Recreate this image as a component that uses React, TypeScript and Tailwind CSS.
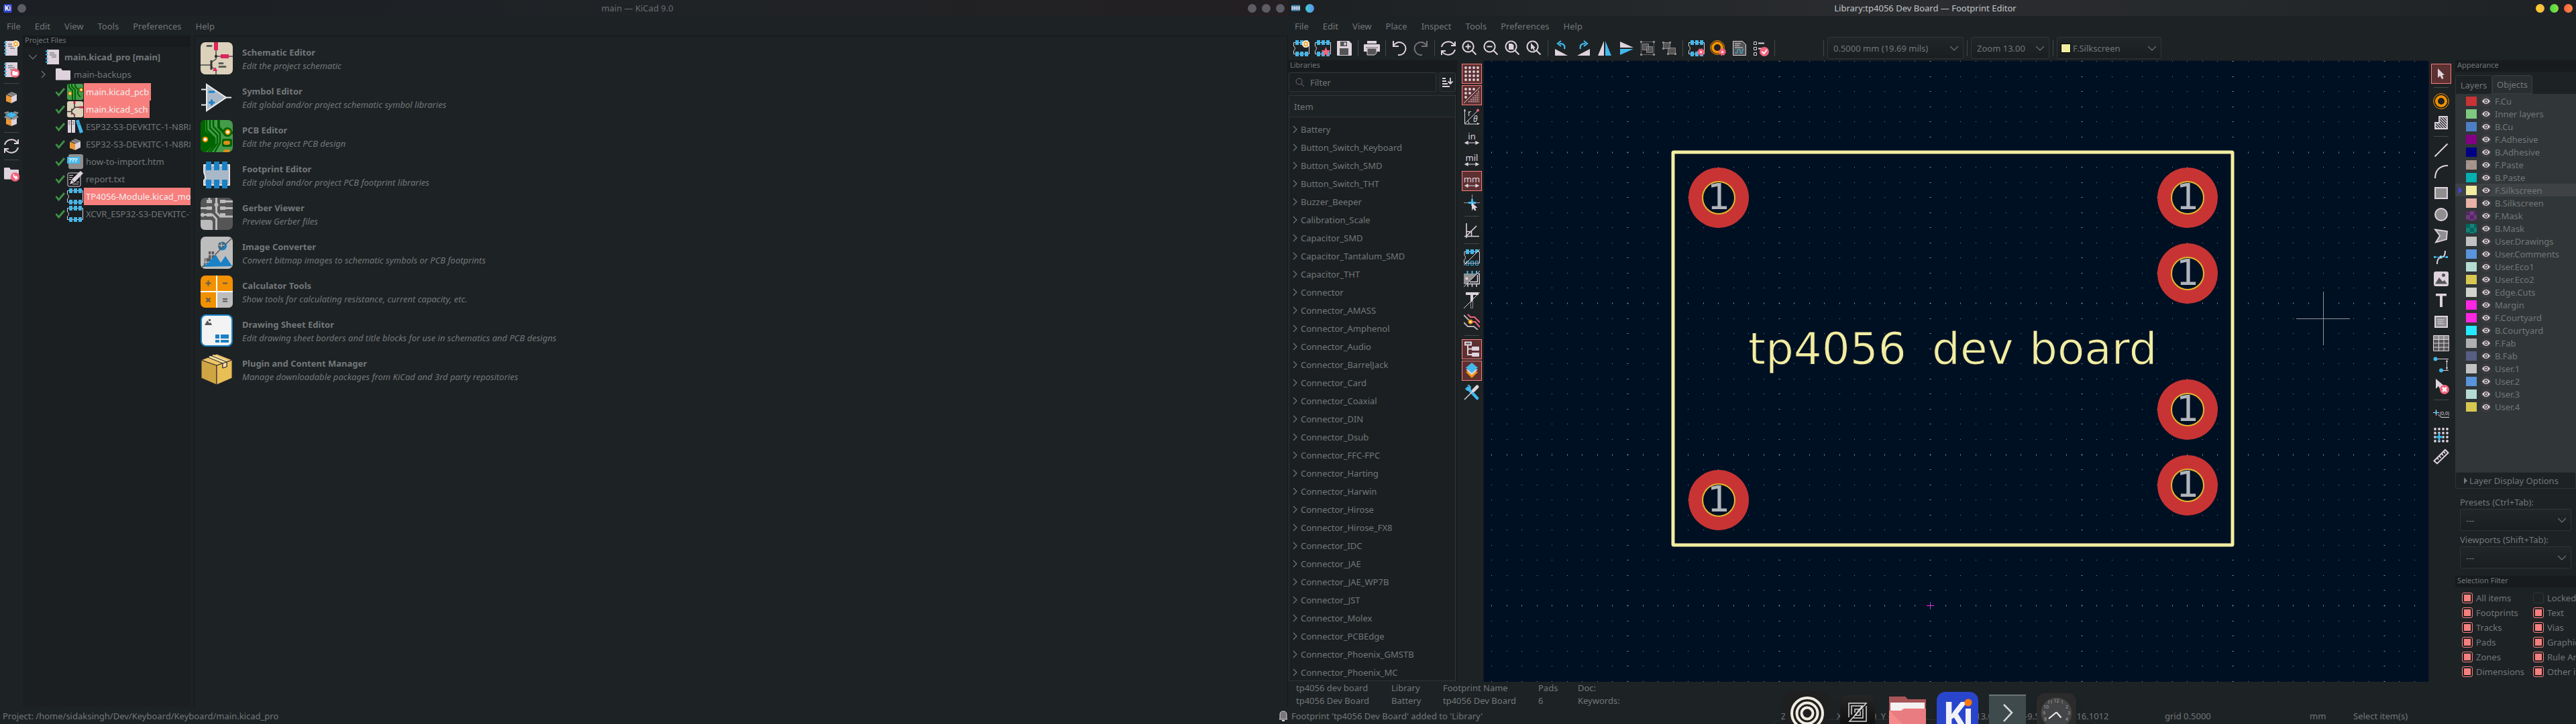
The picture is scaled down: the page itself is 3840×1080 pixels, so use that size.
import React from "react";

const L = "#ded3dd";
const B = "#42b8eb";
const R = "#f2647e";
const O = "#f29100";
const D = "#545454";
const G = "#8f8f8f";

/* ---------- icon drawings, all on a 24 x 24 grid ---------- */

const footprint = (
  <>
    <path d="M2 3.5H23.5V20.5H.5V15.5C3 15 3 9.500 .5 9V3.500H2" fill="none" stroke={L} />
    <path d="M3 0h5v7H3zM10 0h5v7h-5zM17 0h5v7h-5zM3 17h5v7H3zM10 17h5v7h-5zM17 17h5v7h-5z" fill={B} />
  </>
);
const sun = (
  <g stroke={O}>
    <circle cx="18.500" cy="5.500" r="5.500" fill="#fff" stroke="none" />
    <path d="M18.500 .5v10M13.500 5.500h10M15 2l7 7M22 2l-7 7" strokeWidth="1.200" />
    <circle cx="18.500" cy="5.500" r="2" fill="#fff" />
  </g>
);
const notebook = (
  <>
    <path d="M3 1h18v22H3z" fill={L} />
    <path d="M7 6h7M7 9h10M10 12h7" stroke={D} />
    <path d="M1 3.500h4M1 8.500h4M1 14.500h4M1 19.500h4" stroke={B} strokeWidth="2" />
  </>
);
const folder = <path d="M1 5.500V4q0-1 1-1h7l2 3h11q1 0 1 1v12.500q0 1-1 1H2q-1 0-1-1z" fill={L} />;
const box = (
  <>
    <path d="M12 4l8 3-7 4-8-3z" fill={G} />
    <path d="M4 8.500l8 3V21l-8-3z" fill="#ea9836" />
    <path d="M12 11.500l8-4V17l-8 4z" fill={L} />
    <path d="M9 5.500l7 3" stroke={D} />
  </>
);
const refresh = (
  <g fill="none" stroke={L} strokeWidth="2">
    <path d="M2 10C4 2 15-1 21 7M22 14C20 22 9 25 3 17" />
    <path d="M22 2v6h-6M2 22v-6h6" />
  </g>
);
const gear = (
  <>
    <circle cx="18.500" cy="17.500" r="4.500" fill={R} stroke={R} strokeWidth="2" strokeDasharray="2 1.500" />
    <circle cx="18.500" cy="17.500" r="1.500" fill="#fff" />
  </>
);
const lens = <path d="M9.500 1.500a8 8 0 1 0 .1 0M15.500 15.500l6 6" fill="none" stroke={L} strokeWidth="2" />;
const arrowLR = <path d="M4 19h16M2 19l4-2v4zM22 19l-4-2v4z" stroke={L} fill={L} strokeWidth="1.200" />;
const dots = (n: number, step: number, from: number) =>
  Array.from({ length: n * n }, (_, i) => (
    <circle key={i} cx={from + (i % n) * step} cy={from + Math.floor(i / n) * step} r="1.900" fill={L} />
  ));
const slash = <path d="M0 24L24 0" stroke={L} />;

const ICONS: Record<string, React.ReactNode> = {
  notebook,
  folder,
  box,
  refresh,
  footprint,
  newProject: (<>{notebook}{sun}</>),
  openProject: (
    <>
      {notebook}
      <circle cx="17.500" cy="17" r="6.800" fill={R} />
      <path d="M13.500 14h3l1 1h4v5.500h-8z" fill="#fff" />
    </>
  ),
  unbox: (
    <>
      <path d="M4 10l8 3v10l-8-3z" fill="#ea9836" />
      <path d="M12 13l8-3v10l-8 3z" fill={L} />
      <path d="M3 6l9-4 9 4-9 5z" fill={B} />
      <path d="M3 5l7-2-3-2-6 2zM21 5l-7-2 3-2 6 2zM4 7l8 4-3 3-8-4zM20 7l-8 4 3 3 8-4z" fill={G} />
    </>
  ),
  folderGo: (
    <>
      {folder}
      <circle cx="17.500" cy="17" r="6.800" fill={R} />
      <path d="M15.500 13v2q0 3 4 3M18 15.500l2.500 2.500-2.500 2.500" fill="none" stroke="#fff" strokeWidth="1.800" />
    </>
  ),
  check: <path d="M5.500 12l4 5L18 7" fill="none" stroke="#3f9148" strokeWidth="2.800" />,
  pcb: (
    <>
      <rect width="24" height="24" rx="3" fill="#459b4b" />
      <path d="M3 0v5l5 5v14M7 0v4l5 5v15M12 0v4l4 4h5M16 10v5l4 5" fill="none" stroke="#006400" strokeWidth="2" />
      <circle cx="21" cy="9" r="3.500" fill="#006400" />
      <g fill="#fff" stroke={O} strokeWidth="1.500">
        <circle cx="4.500" cy="14.500" r="2" />
        <circle cx="21" cy="9" r="2" />
      </g>
    </>
  ),
  sch: (
    <>
      <rect width="24" height="24" rx="3" fill="#dcd1bb" />
      <path d="M11 3v7l-4 4M11 9h8M0 15.500h7M7 11v9M7 17l4 3v4" fill="none" stroke="#333" strokeWidth="1.500" />
      <path d="M9.500 0h3v4h-3zM18 7.500h6v3h-6zM10 18l3 3h-4z" fill="#c8234a" />
    </>
  ),
  books: (
    <>
      <path d="M1 2h5v19H1zM7 2h5v19H7z" fill={L} />
      <path d="M2 5h3M2 8h3M8 5h3M8 8h3" stroke={D} />
      <path d="M13 3l4.500-1.500L24 20l-5 2z" fill={B} />
      <path d="M15.500 6l3-1M16.500 9l3-1" stroke="#1a6f99" />
    </>
  ),
  html: (
    <>
      <rect x="2" y="1" width="22" height="22" rx="3" fill={G} />
      <path d="M0 5h19v10H0z" fill={B} />
      <text x="2.500" y="13" fontSize="9" fontWeight="700" fill="#fff" fontFamily="Noto Sans">???</text>
    </>
  ),
  report: (
    <>
      <rect x="1" y="3" width="19" height="20" rx="2" fill="#17191b" stroke={L} />
      <path d="M3 6.500h6M3 9.500h5M3 12.500h3M8 19.500h9M14 16.500h4" stroke={L} />
      <path d="M4 20l2.500-7L20 0l4 3.500L11 17z" fill={L} />
      <path d="M6.500 13l4 4" stroke="#17191b" />
    </>
  ),
  newFp: (<>{footprint}{sun}</>),
  starFp: (
    <>
      {footprint}
      <path d="M16.500 10l2 5h5l-4 3.500 1.500 5.500-4.500-3-4.500 3 1.500-5.500-4-3.500h5z" fill={R} />
    </>
  ),
  save: (
    <>
      <path d="M1 2q0-1 1-1h17l4 4v17q0 1-1 1H2q-1 0-1-1z" fill={L} />
      <path d="M6 2h10v7H6zM5 12h13v10H5z" fill={D} />
      <path d="M11.500 3.500h3v4h-3z" fill={L} />
    </>
  ),
  print: (
    <>
      <path d="M5 1h14v4H5zM1 6h22q1 0 1 1v10H0V7q0-1 1-1z" fill={L} />
      <path d="M3 11h18" stroke={D} />
      <path d="M5 12h14v7l-3 3H5z" fill={D} stroke={L} />
    </>
  ),
  undo: (
    <path d="M3 1v8h8M3 8Q9 1 16 4q7 4 5 11-3 8-11 7" fill="none" stroke={L} strokeWidth="2" />
  ),
  redo: (
    <path d="M21 1v8h-8M21 8Q15 1 8 4 1 8 3 15q3 8 11 7" fill="none" stroke="#77727a" strokeWidth="2" />
  ),
  zoomIn: (<>{lens}<path d="M5.500 9.500h8M9.500 5.500v8" stroke={L} strokeWidth="2" /></>),
  zoomOut: (<>{lens}<path d="M5.500 9.500h8" stroke={L} strokeWidth="2" /></>),
  zoomPage: (<>{lens}<path d="M6 5h5l2.500 2.500V14H6z" fill={L} /></>),
  zoomSel: (<>{lens}<path d="M7 4v10l2.500-2 2 4 1.500-1-1.500-3.500H14z" fill={L} /></>),
  rotL: (
    <>
      <path d="M2 13l19 10H2z" fill={L} />
      <path d="M16 13q2-8-7-8M11 1L6 5l5 4" fill="none" stroke={B} strokeWidth="2.200" />
    </>
  ),
  rotR: (
    <>
      <path d="M22 13L3 23h19z" fill={L} />
      <path d="M8 13q-2-8 7-8M13 1l5 4-5 4" fill="none" stroke={B} strokeWidth="2.200" />
    </>
  ),
  mirH: (<><path d="M11 1v22H2z" fill={L} /><path d="M13 1v22h9z" fill={B} /></>),
  mirV: (<><path d="M3 2v9h20z" fill={L} /><path d="M3 13v9l20-9z" fill={B} /></>),
  group: (
    <g stroke="#8a8589" fill={D}>
      <path d="M2.500 2.500h19v19h-19z" fill="none" strokeDasharray="2 1" />
      <path d="M4.500 5.500h9v9h-9zM10.500 9.500h9v9h-9z" />
      <path d="M1 1h3v3H1zM20 1h3v3h-3zM1 20h3v3H1zM20 20h3v3h-3z" fill="#8a8589" stroke="none" />
    </g>
  ),
  ungroup: (
    <g stroke="#8a8589" fill={D}>
      <path d="M3.500 3.500h10v9h-10zM10.500 11.500h11v9h-11z" />
      <path d="M2 2h3v3H2zM12 2h3v3h-3zM2 11h3v3H2zM9 19h3v3H9zM20 19h3v3h-3z" fill="#8a8589" stroke="none" />
    </g>
  ),
  fpGear: (<>{footprint}{gear}</>),
  padGear: (
    <>
      <circle cx="11" cy="11" r="7" fill="none" stroke={O} strokeWidth="4" />
      <circle cx="11" cy="11" r="10.500" fill="none" stroke={O} />
      {gear}
    </>
  ),
  datasheet: (
    <>
      <path d="M2.500 1.500h14l5 5v16h-19z" fill={D} stroke={L} />
      <path d="M5 5h9M5 8h7M5 11h12" stroke={L} />
      <path d="M5 19h4v-5h4v5h3v-5h3" fill="none" stroke={B} />
    </>
  ),
  checklist: (
    <>
      <path d="M1.500 2.500h4v4h-4zM1.500 10.500h4v4h-4zM1.500 18.500h4v4h-4z" fill="none" stroke={L} />
      <path d="M8 4.500h9M8 12.500h5" stroke={L} strokeWidth="2" />
      <circle cx="17" cy="17" r="7" fill={R} />
      <path d="M13.500 17l3 3 4.500-6" fill="none" stroke="#fff" strokeWidth="2" />
    </>
  ),
  grid: dots(4, 6, 3),
  gridOver: (
    <>
      {[[3, 3], [9, 3], [15, 3], [3, 9], [9, 9], [3, 15]].map(([x, y]) => (
        <circle key={`${x}-${y}`} cx={x} cy={y} r="1.900" fill={L} />
      ))}
      <path d="M7 21.500h16M10 18.500h13M13 15.500h10M16 12.500h7M19 9.500h4M21 6.500h2" stroke="#b79ca3" strokeWidth="2" strokeDasharray="2 1" />
      {slash}
    </>
  ),
  polar: (
    <>
      <path d="M1.500 3v20H22M1.500 22.500L21 3M6 18q2 2 2 5" fill="none" stroke={L} />
      <path d="M0 4l1.500-4L3 4zM20 21l4 1.500-4 1.500z" fill={L} />
      <circle cx="21" cy="2.500" r="2" fill={R} />
      <text x="6" y="11" fontSize="12" fill={L} fontFamily="Noto Sans">r</text>
      <text x="14" y="20" fontSize="12" fontStyle="italic" fill={L} fontFamily="Noto Sans">θ</text>
    </>
  ),
  inch: (<><text x="12" y="14" textAnchor="middle" fontSize="13" fill={L} fontFamily="Noto Sans">in</text>{arrowLR}</>),
  mil: (<><text x="12" y="14" textAnchor="middle" fontSize="13" fill={L} fontFamily="Noto Sans">mil</text>{arrowLR}</>),
  mm: (<><text x="12" y="14" textAnchor="middle" fontSize="13" fill={L} fontFamily="Noto Sans">mm</text>{arrowLR}</>),
  cursor: (
    <>
      <path d="M12.500 0v24M0 12.500h24" stroke="#9c959c" />
      <path d="M12.500 7v10M7 12.500h11" stroke={B} strokeWidth="3" />
      <path d="M12 12v11l2.500-2 2 4 2-1-1.500-4h3.500z" fill={L} />
    </>
  ),
  angle: (
    <path d="M4 2v22M1 21.500h22M4 21L19 6M4 14.500h7.500v7" fill="none" stroke={L} strokeWidth="1.600" />
  ),
  padFill: (
    <>
      <path d="M1 9V3.500h22.500V20.500H.5V15.500C3 15 3 9.500 1 9" fill="none" stroke={L} />
      <path d="M3 0h5v7H3zM10 0h5v7h-5zM17 0h5v2l-5 5z" fill={B} />
      <path d="M3.500 17.500h4v6h-4zM10.500 17.500h4v6h-4zM17.500 17.500h4v6h-4z" fill="none" stroke={B} />
      {slash}
    </>
  ),
  bodyFill: (
    <>
      <path d="M0 4h20L4 20H0z" fill={G} />
      <path d="M5.500 0v5M12.500 0v5M19 0v4" stroke={B} strokeWidth="2" />
      <path d="M21 4.500h2.500v15H5M20.500 6v10.500H9M6 19v5M12.500 19v5M19 19v5" fill="none" stroke={L} strokeWidth="1.500" />
      <circle cx="4.500" cy="11.500" r="2" fill={L} />
      {slash}
    </>
  ),
  textFill: (
    <>
      <path d="M3 0h19v4h-8v8l-4 4V4H3z" fill={L} />
      <path d="M10.500 14v9.500h3V11" fill="none" stroke={G} />
      {slash}
    </>
  ),
  tracks: (
    <>
      <path d="M0 2l8 8M0 13l6 6h9l6 5" fill="none" stroke="#b5b0b3" strokeWidth="2" />
      <path d="M6 1l4 4h6l8 8M12 12h5l7 8" fill="none" stroke={R} strokeWidth="2" />
      <circle cx="10" cy="12" r="2.500" fill="#fff" stroke={O} strokeWidth="1.800" />
    </>
  ),
  tree: (
    <>
      <path d="M6 5v15h8M6 11.500h8" fill="none" stroke={L} strokeWidth="2" />
      <path d="M2 1.500h9v4H2z" fill={D} stroke={L} strokeWidth="2" />
      <rect x="12" y="8" width="11" height="6" rx="1" fill={L} />
      <rect x="12" y="17" width="11" height="6" rx="1" fill={L} />
    </>
  ),
  layers: (
    <>
      <path d="M3 14l9 9 9-9-2-1H5z" fill={O} />
      <path d="M3 10l9 9 9-9z" fill={L} />
      <path d="M12 0l9 7.500-9 8-9-8z" fill={B} />
    </>
  ),
  tools: (
    <>
      <path d="M6 6l14 15" stroke={B} strokeWidth="4.500" strokeLinecap="round" />
      <path d="M2 3v4l3 3 5-1 1-5-3-3H5l3 3-2 3-4-1z" fill={B} />
      <path d="M1 23L14 10" stroke={L} strokeWidth="1.500" />
      <path d="M14.500 9.500L20 4" stroke={L} strokeWidth="5" strokeLinecap="round" />
    </>
  ),
  arrow: <path d="M7 4v14l3.500-3 2.500 5 2.500-1-2-5H17z" fill={L} />,
  pad: (
    <>
      <circle cx="12" cy="12" r="7" fill="none" stroke={O} strokeWidth="4" />
      <circle cx="12" cy="12" r="11.400" fill="none" stroke={O} />
    </>
  ),
  zone: (
    <>
      <clipPath id="zone-shape">
        <path d="M9 2h13v20H2V11h7z" />
      </clipPath>
      <path
        d="M2 17l5 5M2 13l9 9M4 11l11 11M7 10l12 12M9 8l13 13M9 4l13 13M12 3l10 10M16 3l6 6"
        stroke={L}
        strokeWidth="1.500"
        clipPath="url(#zone-shape)"
      />
      <path d="M9 3h12v18H3v-9h6z" fill="none" stroke={L} strokeWidth="1.800" />
    </>
  ),
  line: <path d="M2.500 21.500l19-19" stroke={L} strokeWidth="2" />,
  arc: <path d="M3 22C3 10 10 3 22 3" fill="none" stroke={L} strokeWidth="2" />,
  rect: <path d="M3 4h18v16H3z" fill={G} stroke={L} strokeWidth="2" />,
  circle: <circle cx="12" cy="12" r="9" fill={G} stroke={L} strokeWidth="2" />,
  poly: <path d="M3 2.500l18 2.500-1 12-16 4.500 6-10z" fill={G} stroke={L} strokeWidth="1.800" />,
  bezier: (
    <>
      <path d="M6 22C6 5 18 19 18 2" fill="none" stroke={L} strokeWidth="2" />
      <path d="M2 11.500h19" stroke={B} />
      <path d="M1 10h3v3H1zM19 10h3v3h-3z" fill={B} />
      <circle cx="11.500" cy="11.500" r="2" fill={L} stroke={B} />
    </>
  ),
  image: (
    <>
      <rect x="1" y="1" width="22" height="22" rx="3" fill={L} />
      <path d="M3 19.500L9 10l5 6 3-2 4 5.500z" fill={D} />
      <circle cx="15.500" cy="6.500" r="2.500" fill={D} />
    </>
  ),
  text: <path d="M4 2h16v3.500h-6V22h-4V5.500H4z" fill={L} />,
  textbox: (
    <>
      <path d="M3 4h18v16H3z" fill={G} stroke={L} strokeWidth="2" />
      <path d="M6.500 9h10M6.500 12h8M6.500 15h10" stroke={L} />
    </>
  ),
  table: (
    <>
      <path d="M.5 .5h23v23H.5z" fill={D} />
      <path d="M.5 .5h23v6H.5z" fill={G} />
      <path d="M.5 .5h23v23H.5zM.5 6.500h23M.5 12h23M.5 18h23M8.500 6.500v17M16 6.500v17M8.500 0v6M16 0v6" fill="none" stroke={L} />
    </>
  ),
  dimension: (
    <>
      <path d="M3 3.500h20M12 20.500h11M20.500 6v12" stroke={L} />
      <path d="M19 8l1.500-4L22 8zM19 16l1.500 4 1.500-4z" fill={L} />
      <circle cx="3.500" cy="3.500" r="3" fill={B} />
      <circle cx="12" cy="20.500" r="3" fill={B} />
    </>
  ),
  erase: (
    <>
      <path d="M4 1v15l4-4 4 8 3-2-3-6h5z" fill={L} />
      <circle cx="17" cy="17" r="7" fill={R} />
      <path d="M14 14l6 6M20 14l-6 6" stroke="#fff" strokeWidth="2.500" />
    </>
  ),
  origin: (
    <>
      <path d="M4.500 6v9M0 10.500h9M7 13l5 4.500h12" fill="none" stroke={L} />
      <circle cx="4.500" cy="10.500" r="2" fill={B} />
      <text x="10" y="14" fontSize="7" fill={L} fontFamily="Noto Sans">(0,0)</text>
    </>
  ),
  gridOrigin: (
    <>
      {dots(4, 6, 3)}
      <path d="M9 9v12M3 15h12" stroke={B} strokeWidth="2.500" />
    </>
  ),
  ruler: (
    <path d="M1.500 18.500L18 2l4.500 4.500L6 22.500zM6 14l2 2.500M9.500 11.500l2 2.500M13 8l2 2.500M16 5l2 2.500" fill="none" stroke={L} strokeWidth="2" />
  ),
};

/* ---------- launcher drawings, 48 x 48 ---------- */

const APP_ICONS: Record<string, React.ReactNode> = {
  sch: (
    <>
      <rect width="48" height="48" rx="7" fill="#dcd1bb" />
      <path d="M23 10v15l-7 5M23 21h25M0 34h16M16 36l7 6v6" fill="none" stroke="#4a4a4a" strokeWidth="1.500" />
      <path d="M16 27v14" stroke="#333" strokeWidth="3" />
      <path d="M20 0h6v12h-6zM30 18h12v6H30zM22 37l3 6h-7z" fill="#e0245e" />
      <circle cx="23" cy="21" r="2.200" fill="#333" />
      <path d="M10 5.500h6M28 31.500h5M28 36.500h9" stroke="#5c5c5c" strokeWidth="3" strokeLinecap="round" />
    </>
  ),
  sym: (
    <>
      <path d="M1 12.500h8M1 35.500h8M38 24.500h8" stroke="#e8e8e8" strokeWidth="2" />
      <path d="M9 5l29 19.500L9 44z" fill="#a9b8c8" stroke="#ececec" strokeWidth="2" />
      <path d="M12 16h9M12 32h9M16.500 27.500v9" stroke="#1a81c4" strokeWidth="3" />
    </>
  ),
  pcb: (
    <>
      <rect width="48" height="48" rx="7" fill="#459b4b" />
      <path d="M7 0Q0 0 0 7v34q0 7 7 7h1l12-12V26L7 16z" fill="#006400" />
      <path d="M9 0v15l12 12v9L11 48M14 0v12l11 11v12L15 48M19 0v10l10 10v14l-8 14" fill="none" stroke="#006400" strokeWidth="2.500" />
      <path d="M27 0v11l8 8h13" fill="none" stroke="#006400" strokeWidth="4" />
      <circle cx="40" cy="18" r="7" fill="#006400" />
      <circle cx="40.500" cy="18" r="3.200" fill="#fff" stroke={O} strokeWidth="2" />
      <circle cx="7" cy="29" r="3.200" fill="#fff" stroke={O} strokeWidth="2" />
      <rect x="32" y="28" width="15" height="12" rx="3" fill="#006400" />
      <rect x="34" y="31" width="10" height="6" rx="3" fill="#dc8d1a" />
      <path d="M34 48v-2q0-2 3-2h5q2 0 2 2l-2 2z" fill="#dc8d1a" />
    </>
  ),
  fp: (
    <>
      <path d="M5 9h38v30H5v-7q4-2 0-12z" fill="#a9b8c8" stroke="#e8e8e8" strokeWidth="2" />
      <path d="M8 4h8v13H8zM20 4h8v13h-8zM32 4h8v13h-8zM8 31h8v13H8zM20 31h8v13h-8zM32 31h8v13h-8z" fill="#1a81c4" />
    </>
  ),
  gerber: (
    <>
      <rect width="48" height="48" rx="7" fill="#555" />
      <path d="M0 33h14q4 0 4 4v11H7q-7 0-7-7z" fill="#bbb" />
      <path d="M13 0v4M23.500 0v22l6 6H48M0 15.500h12M0 25.500h18l5.500 6V48M34 5.500h14M34 15.500h14" fill="none" stroke="#bbb" strokeWidth="3" />
      <path d="M9 3h8v5H9zM29 3h8v5h-8zM9 13h8v5H9zM29 13h8v5h-8zM9 23h8v5H9zM29 23h8v5h-8z" fill="#bbb" />
      <circle cx="23.500" cy="10.500" r="3" fill="#bbb" />
      <circle cx="3" cy="25.500" r="3" fill="#bbb" />
    </>
  ),
  image: (
    <>
      <rect width="48" height="48" rx="7" fill="#bdbdbd" />
      <circle cx="32.500" cy="14" r="6.500" fill="#1a81c4" />
      <path d="M27 9h9l-9 10zM12 22h8v8l-8 8zM6 32h6v5l-7 7z" fill="#5c5c5c" />
      <path d="M4 45l18-19 8 13 7-10 10 15z" fill="#1a81c4" />
      <path d="M2 46L46 3" stroke="#555" strokeWidth="1.500" />
      <path d="M31 9v7M27 13h9M16 22v12M12 27h10M8 32v10M5 38h8" stroke="#d6d6d6" />
    </>
  ),
  calc: (
    <>
      <rect width="48" height="48" rx="7" fill={O} />
      <path d="M25 25h23v16q0 7-7 7H25z" fill="#bdbdbd" />
      <path d="M24 0v48M0 24h48" stroke="#fff" strokeWidth="2" />
      <path d="M7.500 11.500h8M11.500 7.500v8M33 11.500h7M8.500 33.500l6 6M14.500 33.500l-6 6M33 35h7M33 38.500h7" stroke="#5a5a5a" strokeWidth="2" />
    </>
  ),
  sheet: (
    <>
      <rect x="1" y="1" width="46" height="46" rx="7" fill="#f3f3f3" stroke="#1a81c4" strokeWidth="2" />
      <path d="M6 16l4-7 3 4 2-1 2 4z" fill="#555" />
      <circle cx="13.500" cy="8.500" r="1.700" fill="#555" />
      <path d="M22 30h6v6h-6zM30 30h12v6H30zM22 38h6v4h-6zM30 38h12v4H30z" fill="#1a81c4" />
    </>
  ),
  plugin: (
    <g stroke="#2a2530" strokeWidth="1" strokeLinejoin="round">
      <path d="M1 10l23 8v29L1 37z" fill="#cfa544" />
      <path d="M47 10l-23 8v29l23-10z" fill="#e8bf55" />
      <path d="M24 1l23 9-23 8L1 10z" fill="#edc565" />
      <path d="M13 5l23 9M18 3l21 9" stroke="#f5dfa0" strokeWidth="2.500" />
      <path d="M11 6l22 9v7l6-2v-7L17 4" fill="none" />
      <path d="M33 15v7l6-2v-7z" fill="#f5dfa0" />
    </g>
  ),
};

function Icon({ name, className = "size-6" }: { name: string; className?: string }) {
  return (
    <svg viewBox="0 0 24 24" className={`shrink-0 ${className}`} aria-hidden="true">
      {ICONS[name]}
    </svg>
  );
}

function Chevron({ dir, className = "" }: { dir: "right" | "down"; className?: string }) {
  return (
    <svg viewBox="0 0 12 12" className={`size-3 shrink-0 ${className}`} aria-hidden="true">
      <path d={dir === "right" ? "M3 1l5 5-5 5" : "M0 3l6 6 6-6"} fill="none" stroke="currentColor" strokeWidth="1.200" />
    </svg>
  );
}

/* ---------- shared window parts ---------- */

function TitleBar({ title, left, buttons, active }: { title: string; left: React.ReactNode; buttons: string[]; active?: boolean }) {
  return (
    <header
      className={`flex h-6 shrink-0 items-center ${
        active
          ? "bg-linear-to-r from-[#1d2023] via-[#2b2d31] to-[#1f2225] text-[#c3c6c7]"
          : "bg-linear-to-r from-[#1b1e22] via-[#1f2326] to-[#231f22] text-[#6a6d70]"
      }`}
    >
      <div className="flex w-[42px] items-center gap-2 pl-[5px]">{left}</div>
      <h1 className="flex-1 text-center">{title}</h1>
      <div className="flex w-[62px] gap-2 pl-[2px]">
        {buttons.map((c, i) => (
          <button key={i} aria-label={["Minimise", "Maximise", "Close"][i]} className={`size-[13px] rounded-full ${c}`} />
        ))}
      </div>
    </header>
  );
}

function MenuBar({ items }: { items: string[] }) {
  return (
    <nav className="flex h-[29px] shrink-0 items-center gap-[21px] pl-[10px]">
      {items.map((m) => (
        <button key={m}>{m}</button>
      ))}
    </nav>
  );
}

function PaneHeader({ children }: { children: string }) {
  return <h2 className="h-[17px] shrink-0 bg-[#171b1d] pl-[3px] text-[11px] leading-[14px]">{children}</h2>;
}

function Bar({ items, vertical, active = [] }: { items: string[]; vertical?: boolean; active?: string[] }) {
  return (
    <div className={`flex items-center ${vertical ? "flex-col gap-[2px]" : "gap-[2px]"}`} role="toolbar">
      {items.map((n, i) =>
        n === "|" ? (
          <span key={i} className={`shrink-0 bg-[#43474a] ${vertical ? "my-[3px] h-px w-[22px]" : "mx-[3px] h-6 w-px"}`} />
        ) : (
          <button
            key={i}
            aria-label={n}
            className={`flex size-[30px] shrink-0 items-center justify-center ${
              active.includes(n) ? "border border-[#f77f7d] bg-[#5d3031]" : ""
            }`}
          >
            <Icon name={n} />
          </button>
        )
      )}
    </div>
  );
}

function Combo({ label, value, className, swatch }: { label: string; value: string; className: string; swatch?: boolean }) {
  return (
    <div className={`relative flex h-[33px] shrink-0 items-center ${className}`}>
      <select
        aria-label={label}
        className={`size-full appearance-none rounded-[3px] border border-[#303437] bg-linear-to-b from-[#212629] to-[#1a1e20] pr-6 ${
          swatch ? "pl-[23px]" : "pl-2"
        }`}
      >
        <option>{value}</option>
      </select>
      {swatch && <span className="absolute left-[6px] h-[14px] w-[15px] border border-black bg-[#f2eda1]" />}
      <Chevron dir="down" className="pointer-events-none absolute right-2" />
    </div>
  );
}

/* ---------- project manager ---------- */

const FILES: [string, string, boolean][] = [
  ["pcb", "main.kicad_pcb", true],
  ["sch", "main.kicad_sch", true],
  ["books", "ESP32-S3-DEVKITC-1-N8R8.kicad_sym", false],
  ["box", "ESP32-S3-DEVKITC-1-N8R8.step", false],
  ["html", "how-to-import.htm", false],
  ["report", "report.txt", false],
  ["footprint", "TP4056-Module.kicad_mod", true],
  ["footprint", "XCVR_ESP32-S3-DEVKITC-1.kicad_mod", false],
];

const LAUNCHERS: [string, string, string][] = [
  ["sch", "Schematic Editor", "Edit the project schematic"],
  ["sym", "Symbol Editor", "Edit global and/or project schematic symbol libraries"],
  ["pcb", "PCB Editor", "Edit the project PCB design"],
  ["fp", "Footprint Editor", "Edit global and/or project PCB footprint libraries"],
  ["gerber", "Gerber Viewer", "Preview Gerber files"],
  ["image", "Image Converter", "Convert bitmap images to schematic symbols or PCB footprints"],
  ["calc", "Calculator Tools", "Show tools for calculating resistance, current capacity, etc."],
  ["sheet", "Drawing Sheet Editor", "Edit drawing sheet borders and title blocks for use in schematics and PCB designs"],
  ["plugin", "Plugin and Content Manager", "Manage downloadable packages from KiCad and 3rd party repositories"],
];

function KiLogo({ className }: { className: string }) {
  return (
    <span className={`flex items-center justify-center bg-[#2c44c8] font-bold text-white ${className}`}>
      K<span className="text-[#f6d6c8]">i</span>
    </span>
  );
}

function ProjectManager() {
  const dim = "bg-[#5d5c64]";
  return (
    <section className="flex min-w-0 flex-col overflow-hidden">
      <TitleBar
        title="main — KiCad 9.0"
        left={
          <>
            <KiLogo className="size-[13px] rounded-[3px] text-[10px]" />
            <span className="size-[13px] rounded-full bg-[#5d5c64]" />
          </>
        }
        buttons={[dim, dim, dim]}
      />
      <MenuBar items={["File", "Edit", "View", "Tools", "Preferences", "Help"]} />
      <div className="flex min-h-0 flex-1">
        <div className="w-[34px] shrink-0 pt-1">
          <Bar vertical items={["newProject", "openProject", "|", "box", "unbox", "|", "refresh", "|", "folderGo"]} />
        </div>
        <aside className="flex w-[250px] shrink-0 flex-col overflow-hidden bg-[#1b1f21]">
          <PaneHeader>Project Files</PaneHeader>
          <ul className="pt-[2px] whitespace-nowrap">
            <li className="flex h-[26px] items-center pl-[9px]">
              <Chevron dir="down" />
              <Icon name="notebook" className="ml-3 size-6" />
              <span className="pl-[5px] font-bold">main.kicad_pro [main]</span>
            </li>
            <li className="flex h-[26px] items-center pl-[25px]">
              <Chevron dir="right" />
              <Icon name="folder" className="ml-[11px] size-6" />
              <span className="pl-1">main-backups</span>
            </li>
            {FILES.map(([icon, name, sel]) => (
              <li key={name} className="flex h-[26px] items-center pl-11">
                <Icon name="check" className="-mr-[2px] size-6" />
                <Icon name={icon} />
                <span className={`ml-px h-[26px] px-[3px] leading-[26px] ${sel ? "bg-[#f77f7d] text-[#f2eeee]" : ""}`}>{name}</span>
              </li>
            ))}
          </ul>
        </aside>
        <main className="ml-[5px] flex-1 border-t border-r border-l border-[#15191b] pt-[9px] pl-[9px]">
          {LAUNCHERS.map(([icon, title, text]) => (
            <button key={title} className="mb-[10px] flex h-12 items-start gap-[14px] text-left">
              <svg viewBox="0 0 48 48" className="size-12 shrink-0" aria-hidden="true">
                {APP_ICONS[icon]}
              </svg>
              <span className="flex flex-col pt-[5px] leading-5">
                <b>{title}</b>
                <i>{text}</i>
              </span>
            </button>
          ))}
        </main>
      </div>
      <footer className="flex h-[25px] shrink-0 items-center justify-between pl-1">
        <span>Project: /home/sidaksingh/Dev/Keyboard/Keyboard/main.kicad_pro</span>
        <svg viewBox="0 0 14 16" className="h-4 w-[14px]" aria-label="Notifications">
          <path d="M2 12V6q0-5 5-5t5 5v6l1 1H1z" fill="#77777a" stroke={L} />
          <path d="M5 15h4" stroke={L} strokeWidth="2" />
        </svg>
      </footer>
    </section>
  );
}

/* ---------- footprint editor ---------- */

const LIBRARIES = [
  "Battery", "Button_Switch_Keyboard", "Button_Switch_SMD", "Button_Switch_THT", "Buzzer_Beeper", "Calibration_Scale",
  "Capacitor_SMD", "Capacitor_Tantalum_SMD", "Capacitor_THT", "Connector", "Connector_AMASS", "Connector_Amphenol",
  "Connector_Audio", "Connector_BarrelJack", "Connector_Card", "Connector_Coaxial", "Connector_DIN", "Connector_Dsub",
  "Connector_FFC-FPC", "Connector_Harting", "Connector_Harwin", "Connector_Hirose", "Connector_Hirose_FX8", "Connector_IDC",
  "Connector_JAE", "Connector_JAE_WP7B", "Connector_JST", "Connector_Molex", "Connector_PCBEdge", "Connector_Phoenix_GMSTB",
  "Connector_Phoenix_MC",
];

const LAYERS: [string, string, string?][] = [
  ["F.Cu", "#c83434"], ["Inner layers", "#7fc87f"], ["B.Cu", "#4d7fc4"], ["F.Adhesive", "#840084"], ["B.Adhesive", "#000084"],
  ["F.Paste", "#a39189", "#a8968f"], ["B.Paste", "#00b2b2", "#08adad"], ["F.Silkscreen", "#f2eda1"], ["B.Silkscreen", "#e8b2a7"],
  ["F.Mask", "#552863", "#6d3c7c"], ["B.Mask", "#02665f", "#1a7f76"], ["User.Drawings", "#c2c2c2"], ["User.Comments", "#5994dc"],
  ["User.Eco1", "#b4dbd2"], ["User.Eco2", "#d8c852"], ["Edge.Cuts", "#d0d2cd"], ["Margin", "#ff26e2"], ["F.Courtyard", "#ff26e2"],
  ["B.Courtyard", "#26e9ff"], ["F.Fab", "#afafaf"], ["B.Fab", "#585d84"], ["User.1", "#c2c2c2"], ["User.2", "#5994dc"],
  ["User.3", "#b4dbd2"], ["User.4", "#d8c852"],
];

const FILTERS: [string, boolean][] = [
  ["All items", true], ["Locked items", false],
  ["Footprints", true], ["Text", true],
  ["Tracks", true], ["Vias", true],
  ["Pads", true], ["Graphics", true],
  ["Zones", true], ["Rule Areas", true],
  ["Dimensions", true], ["Other items", true],
];

const STEP = 22.55;
const at = (n: number) => Math.round(n * STEP);
const PADS = [[-14, -27], [-14, -7], [17, -27], [17, -22], [17, -13], [17, -8]];

function gridPath() {
  let d = "";
  for (let i = -29; i <= 32; i++) {
    for (let j = -36; j <= 5; j++) {
      d += `M${at(i)} ${at(j)}h1v1h-1z`;
    }
  }
  return d;
}

function majorPath() {
  let d = "";
  for (let i = -29; i <= 32; i++) {
    for (let j = -36; j <= 5; j++) {
      if (j % 10 === 0) d += `M${at(i)} ${at(j) - 1}h1v3h-1z`;
      if (i % 10 === 0) d += `M${at(i) - 1} ${at(j)}h3v1h-3z`;
    }
  }
  return d;
}

function Canvas() {
  return (
    <div className="min-w-0 flex-1 overflow-hidden border-t border-l border-[#15191b] bg-[#001023]">
      <svg className="size-full" role="img" aria-label="Footprint drawing">
        <g transform="translate(665 812)">
          <path d={majorPath()} fill="#4d5762" />
          <path d={gridPath()} fill="#7f868c" />
          <rect x={at(-17)} y={at(-30)} width={at(37)} height={at(26)} rx="1" fill="none" stroke="#f2eda1" strokeWidth="5" />
          {PADS.map(([x, y]) => (
            <g key={`${x},${y}`} transform={`translate(${at(x) + 1} ${at(y) + 1})`}>
              <circle r="45" fill="#c83434" />
              <circle r="24" fill="#001023" stroke="#e3b72e" strokeWidth="2" />
              <text y="17" textAnchor="middle" fontSize="53" fill="#b1b5bb" fontFamily="DejaVu Sans">1</text>
            </g>
          ))}
          <text y="-360" fontSize="66" fill="#f2eda1" stroke="#001023" strokeWidth="1" fontFamily="DejaVu Sans">
            <tspan x="-271">tp4056</tspan> <tspan x="3">dev</tspan> <tspan x="148">board</tspan>
          </text>
          <path d={`M${at(26) - 40} ${at(-19) + 0.5}h80M${at(26) + 0.5} ${at(-19) - 40}v80`} stroke="#8f9498" />
          <path d="M.5-5v11" stroke="#8a4fb8" />
          <path d="M-5 .5h11" stroke="#ff26e2" />
        </g>
      </svg>
    </div>
  );
}

function Eye() {
  return (
    <svg viewBox="0 0 16 16" className="size-4" aria-hidden="true">
      <circle cx="8" cy="8" r="8" fill="#3d3c3e" />
      <path d="M2 8q6-8 12 0-6 8-12 0z" fill={L} />
      <circle cx="8" cy="8" r="2" fill={L} stroke="#444" strokeWidth="1.300" />
    </svg>
  );
}

function Appearance() {
  return (
    <aside className="flex w-[180px] shrink-0 flex-col overflow-hidden whitespace-nowrap">
      <PaneHeader>Appearance</PaneHeader>
      <div className="mt-[5px] flex h-7 shrink-0" role="tablist">
        <button role="tab" aria-selected="true" className="w-[55px] rounded-t-[3px] border border-b-0 border-[#303437]">Layers</button>
        <button role="tab" aria-selected="false" className="w-[60px] rounded-t-[3px] border border-[#3a3e40] bg-[#2a2e30]">Objects</button>
      </div>
      <ul className="flex-1 overflow-hidden bg-[#313638] pt-[1px]">
        {LAYERS.map(([name, color, alt]) => {
          const current = name === "F.Silkscreen";
          return (
            <li key={name} className={`flex h-[19px] items-center ${current ? "bg-[#3e4244]" : ""}`}>
              <svg viewBox="0 0 16 14" className="h-[14px] w-4 shrink-0" aria-hidden="true">
                {current && <path d="M5 2l5 5-5 5z" fill="#4646f0" />}
              </svg>
              <svg viewBox="0 0 16 14" className="h-[14px] w-4 shrink-0" aria-hidden="true">
                <path d="M0 0h16v14H0z" fill={color} />
                {alt && <path d="M6 0h6v6H6zM0 6h6v6H0zM12 6h4v6h-4zM6 12h6v2H6z" fill={alt} />}
              </svg>
              <button aria-label={`Show ${name}`} className="mr-[5px] ml-[6px]">
                <Eye />
              </button>
              <span>{name}</span>
            </li>
          );
        })}
      </ul>
      <button className="flex h-[25px] shrink-0 items-center gap-[3px] border border-[#303437] pl-3">
        <svg viewBox="0 0 5 10" className="h-[10px] w-[5px]" aria-hidden="true">
          <path d="M0 0l5 5-5 5z" fill="currentColor" />
        </svg>
        Layer Display Options
      </button>
      <div className="flex shrink-0 flex-col px-[7px] pt-[10px] pb-[11px]">
        <span className="h-5 leading-5">Presets (Ctrl+Tab):</span>
        <Combo label="Presets" value="---" className="w-full" />
        <span className="mt-[3px] h-5 leading-5">Viewports (Shift+Tab):</span>
        <Combo label="Viewports" value="---" className="w-full" />
      </div>
      <PaneHeader>Selection Filter</PaneHeader>
      <div className="grid shrink-0 grid-cols-[106px_1fr] pt-[5px] pb-[4px] pl-[10px]">
        {FILTERS.map(([name, on]) => (
          <label key={name} className="flex h-[22px] items-center gap-[5px]">
            <input
              type="checkbox"
              defaultChecked={on}
              className="size-4 shrink-0 appearance-none rounded-[3px] border border-[#303437] bg-clip-content p-[2px] checked:border-[#f77f7d] checked:bg-[#f77f7d]"
            />
            {name}
          </label>
        ))}
      </div>
    </aside>
  );
}

function FootprintEditor() {
  return (
    <section className="flex min-w-0 flex-col overflow-hidden">
      <TitleBar
        active
        title="Library:tp4056 Dev Board — Footprint Editor"
        left={
          <>
            <svg viewBox="0 0 14 12" className="h-3 w-[13px]" aria-hidden="true">
              <path d="M0 2h14v8H0z" fill="#b7c3cf" />
              <path d="M2 1h2v3H2zM6 1h2v3H6zM10 1h2v3h-2zM2 8h2v3H2zM6 8h2v3H6zM10 8h2v3h-2z" fill="#1a81c4" />
            </svg>
            <span className="size-[13px] rounded-full bg-linear-to-r from-[#3ecfd8] to-[#5b8fe8]" />
          </>
        }
        buttons={[
          "bg-linear-to-r from-[#f5d020] to-[#f9b84a]",
          "bg-linear-to-r from-[#3fd64a] to-[#8ee03a]",
          "bg-linear-to-r from-[#ff5f3c] to-[#fb8b4a]",
        ]}
      />
      <MenuBar items={["File", "Edit", "View", "Place", "Inspect", "Tools", "Preferences", "Help"]} />
      <div className="flex h-[37px] shrink-0 items-center gap-[5px] pl-[5px]">
        <Bar
          items={[
            "newFp", "starFp", "save", "|", "print", "|", "undo", "redo", "|", "refresh", "zoomIn", "zoomOut", "zoomPage", "zoomSel",
            "|", "rotL", "rotR", "mirH", "mirV", "group", "ungroup", "|", "fpGear", "padGear", "datasheet", "checklist", "|",
          ]}
        />
        <span className="ml-16 h-6 w-px bg-[#43474a]" />
        <Combo label="Grid" value="0.5000 mm (19.69 mils)" className="w-[203px]" />
        <span className="h-6 w-px bg-[#43474a]" />
        <Combo label="Zoom" value="Zoom 13.00" className="w-[117px]" />
        <span className="h-6 w-px bg-[#43474a]" />
        <Combo label="Layer" value="F.Silkscreen" className="w-[156px]" swatch />
      </div>
      <div className="flex min-h-0 flex-1">
        <aside className="flex w-[252px] shrink-0 flex-col overflow-hidden border-r border-[#171b1d]">
          <PaneHeader>Libraries</PaneHeader>
          <div className="mt-px flex h-[29px] shrink-0 gap-[5px] px-px">
            <label className="flex flex-1 items-center gap-2 rounded-[3px] border border-[#303437] bg-[#1b1f21] pl-[9px]">
              <svg viewBox="0 0 14 14" className="size-[14px]" aria-hidden="true">
                <path d="M5.500 1a4.500 4.500 0 1 0 .1 0M9 9l4 4" fill="none" stroke="currentColor" />
              </svg>
              <input aria-label="Filter" placeholder="Filter" className="w-40 bg-transparent outline-none placeholder:text-[#73777a]" />
            </label>
            <button aria-label="Sort" className="flex w-6 items-center justify-center rounded-[3px] border border-[#303437]">
              <svg viewBox="0 0 16 16" className="size-4" aria-hidden="true">
                <path d="M0 2h5M0 6h6M0 10h8M0 14h11" stroke={L} strokeWidth="2" />
                <path d="M12 1v9M8.500 6.500L12 10l3.500-3.500" fill="none" stroke={L} strokeWidth="1.800" />
              </svg>
            </button>
          </div>
          <div className="mx-px mt-[5px] mb-px flex-1 overflow-hidden border border-[#303437] bg-[#1b1f21]">
            <div className="h-8 border-b border-[#303437] bg-[#1d2224] pl-[7px] leading-[33px]">Item</div>
            <ul className="pt-1">
              {LIBRARIES.map((l) => (
                <li key={l} className="flex h-[27px] items-center pl-[3px]">
                  <Chevron dir="right" />
                  <span className="pl-[2px]">{l}</span>
                </li>
              ))}
            </ul>
          </div>
        </aside>
        <div className="w-[39px] shrink-0 pt-[5px] pl-[5px]">
          <Bar
            vertical
            active={["grid", "gridOver", "mm", "tree", "layers"]}
            items={["grid", "gridOver", "polar", "inch", "mil", "mm", "cursor", "|", "angle", "|", "padFill", "bodyFill", "textFill", "tracks", "|", "tree", "layers", "tools"]}
          />
        </div>
        <Canvas />
        <div className="w-10 shrink-0 border-l border-[#171b1d] pt-[5px] pr-1">
          <Bar
            vertical
            active={["arrow"]}
            items={["arrow", "|", "pad", "zone", "|", "line", "arc", "rect", "circle", "poly", "bezier", "image", "text", "textbox", "table", "dimension", "erase", "|", "origin", "gridOrigin", "ruler"]}
          />
        </div>
        <Appearance />
      </div>
      <dl className="grid h-[38px] shrink-0 grid-flow-col grid-cols-[142px_77px_142px_59px_auto] grid-rows-2 content-center justify-start pl-3 leading-[19px]">
        <dt>tp4056 dev board</dt><dd>tp4056 Dev Board</dd>
        <dt>Library</dt><dd>Battery</dd>
        <dt>Footprint Name</dt><dd>tp4056 Dev Board</dd>
        <dt>Pads</dt><dd>6</dd>
        <dt>Doc:</dt><dd>Keywords:</dd>
      </dl>
      <footer className="grid h-[25px] shrink-0 grid-cols-[730px_83px_189px_300px_216px_65px_1fr] items-center pl-[5px] whitespace-pre">
        <span>Footprint 'tp4056 Dev Board' added to 'Library'</span>
        <span>Z 13.00</span>
        <span>X 13.0000  Y -9.5000</span>
        <span>dx 13.0000  dy -9.5000  dist 16.1012</span>
        <span>grid 0.5000</span>
        <span>mm</span>
        <span>Select item(s)</span>
      </footer>
    </section>
  );
}

/* ---------- dock ---------- */

function Dock() {
  return (
    <nav aria-label="Dock" className="absolute right-[712px] -bottom-6 flex h-[31px] w-[488px] rounded-t-2xl border border-[#2c3032] pl-5">
      <div className="-mt-[43px] flex items-start gap-4">
        <button aria-label="Rings" className="rounded-xl bg-[#1f1f1f] shadow-lg">
          <svg viewBox="0 0 66 66" className="size-[66px]">
            <g fill="none" stroke="#f0ece0" strokeWidth="4">
              <circle cx="33" cy="33" r="23" />
              <circle cx="33" cy="33" r="15.500" />
              <circle cx="33" cy="33" r="8.500" />
            </g>
          </svg>
        </button>
        <button aria-label="Zed" className="mt-[6px] rounded-xl bg-linear-to-b from-[#262626] to-[#0c0c0c] shadow-lg">
          <svg viewBox="0 0 52 52" className="size-[52px]">
            <path d="M13 33V12h26L14 39h25V16M17 29V16h16L19 34M34 20v14H20M22 26v-5h7l-7 9h8v-6" fill="none" stroke="#d9d9d9" strokeWidth="1.500" />
          </svg>
        </button>
        <button aria-label="Files" className="mt-[8px] ml-[5px]">
          <svg viewBox="0 0 55 50" className="h-[50px] w-[55px]">
            <path d="M0 0h24l4 4h27v46H0z" fill="#a85557" />
            <path d="M2 9h51v20H2z" fill="#f4f2f2" />
            <path d="M0 21h18l4-3h33v32H0z" fill="#e97c80" />
            <path d="M0 21l29 29H0z" fill="#f58a8b" />
          </svg>
        </button>
        <button aria-label="KiCad" className="mt-px">
          <svg viewBox="0 0 62 62" className="size-[62px]">
            <rect width="62" height="62" rx="13" fill="#2945cc" />
            <text x="9" y="55" fontSize="55" fontWeight="700" fill="#f2f2f6" fontFamily="Noto Sans">K</text>
            <path d="M43 25h8v37h-8z" fill="#f2f2f6" />
            <circle cx="47" cy="16" r="5.500" fill="#ff7a0a" />
          </svg>
        </button>
        <button aria-label="Terminal" className="mt-[5px]">
          <svg viewBox="0 0 55 55" className="size-[55px]">
            <path d="M0 0h55v55H0z" fill="#3f4a4c" />
            <path d="M0 0h55v2H0z" fill="#6b7678" />
            <path d="M22 15l12 12-12 13" fill="none" stroke="#d8dadb" strokeWidth="2.500" />
          </svg>
        </button>
        <button aria-label="Clock" className="mt-[3px] rounded-xl bg-[#2b2b2b] shadow-lg">
          <svg viewBox="0 0 59 59" className="size-[59px]">
            <circle cx="29.500" cy="29.500" r="23" fill="#444546" />
            <g fontSize="7" fill="#a5a5a5" textAnchor="middle" fontFamily="Noto Sans">
              <text x="29.500" y="14">12</text><text x="38" y="16">1</text><text x="45" y="23">2</text><text x="48" y="32">3</text>
              <text x="20" y="16">11</text><text x="14" y="23">10</text><text x="11" y="32">9</text><text x="13" y="41">8</text>
              <text x="45" y="41">4</text>
            </g>
            <path d="M29.500 28.500L18 38M29.500 28.500l7 8" stroke="#f2f2f2" strokeWidth="2" />
          </svg>
        </button>
      </div>
    </nav>
  );
}

export default function App() {
  return (
    <div className="relative grid h-screen w-full grid-cols-2 overflow-hidden bg-[#1d2224] font-['Noto_Sans',sans-serif] text-[13px] leading-5 text-[#73777a]">
      <ProjectManager />
      <FootprintEditor />
      <Dock />
    </div>
  );
}
